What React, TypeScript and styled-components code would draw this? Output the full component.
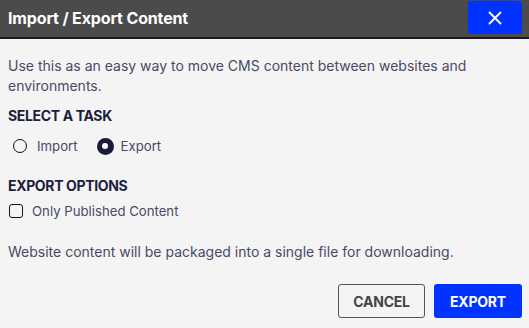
import React from "react";
import styled, { createGlobalStyle } from "styled-components";

const Global = createGlobalStyle`
  html, body { margin: 0; padding: 0; background: #f4f4f4; }
  body { font-family: Inter, "Noto Sans", sans-serif; -webkit-font-smoothing: antialiased; }
  * { box-sizing: border-box; }
`;

const Dialog = styled.div`
  width: 529px;
  height: 328px;
  background: #f4f4f4;
  display: flex;
  flex-direction: column;
`;

const Header = styled.div`
  height: 39px;
  background: #4b4b4b;
  border-bottom: 2px solid #1c1c1c;
  display: flex;
  align-items: center;
  justify-content: space-between;
  padding: 0 7px 2px 8px;
`;

const Title = styled.h1`
  margin: 0;
  font-size: 16px;
  font-weight: 700;
  color: #ffffff;
  letter-spacing: -0.15px;
`;

const CloseButton = styled.button`
  width: 54px;
  height: 33px;
  background: #0033ff;
  border: none;
  border-radius: 3px;
  display: flex;
  align-items: center;
  justify-content: center;
  padding: 0;
`;

const Body = styled.div`
  padding: 17px 7px 0 8px;
  display: flex;
  flex-direction: column;
`;

const Para = styled.p<{ $mt?: number }>`
  margin: ${(p) => p.$mt ?? 0}px 0 0;
  font-size: 14px;
  line-height: 20px;
  color: #4a4a66;
`;

const SectionHeading = styled.h2<{ $mt: number }>`
  margin: ${(p) => p.$mt}px 0 0;
  font-size: 14px;
  line-height: 18px;
  font-weight: 700;
  color: #1d1d3d;
  letter-spacing: -0.35px;
`;

const OptionRow = styled.div<{ $mt: number }>`
  margin-top: ${(p) => p.$mt}px;
  height: 20px;
  display: flex;
  align-items: center;
`;

const RadioLabel = styled.label<{ $checked?: boolean }>`
  display: flex;
  align-items: center;
  font-size: 13.2px;
  color: #4a4a66;
  margin-left: ${(p) => (p.$checked ? 0 : 5)}px;
  margin-right: ${(p) => (p.$checked ? 0 : 19)}px;
`;

const RadioCircle = styled.span<{ $checked?: boolean }>`
  width: ${(p) => (p.$checked ? 17 : 14)}px;
  height: ${(p) => (p.$checked ? 17 : 14)}px;
  border-radius: 50%;
  border: ${(p) => (p.$checked ? "none" : "1.5px solid #111")};
  background: ${(p) => (p.$checked ? "#1b1b3a" : "transparent")};
  display: flex;
  align-items: center;
  justify-content: center;
  margin-right: ${(p) => (p.$checked ? 7 : 10)}px;
  &::after {
    content: "";
    display: ${(p) => (p.$checked ? "block" : "none")};
    width: 6px;
    height: 6px;
    border-radius: 50%;
    background: #fff;
  }
`;

const CheckBox = styled.span`
  width: 14px;
  height: 14px;
  border: 1.5px solid #111;
  border-radius: 3px;
  margin: 0 9px 0 1px;
`;

const CheckLabel = styled.label`
  display: flex;
  align-items: center;
  font-size: 13.2px;
  color: #4a4a66;
`;

const Footer = styled.div`
  margin-top: 22px;
  display: flex;
  justify-content: flex-end;
  gap: 9px;
`;

const Button = styled.button<{ $primary?: boolean }>`
  height: 34px;
  width: ${(p) => (p.$primary ? 88 : 87)}px;
  border-radius: 3px;
  font-family: Inter, "Noto Sans", sans-serif;
  font-size: 14px;
  font-weight: 700;
  letter-spacing: -0.2px;
  color: ${(p) => (p.$primary ? "#ffffff" : "#444444")};
  background: ${(p) => (p.$primary ? "#0033ff" : "#f4f4f4")};
  border: ${(p) => (p.$primary ? "none" : "1px solid #555")};
  padding: 0;
`;

export default function App() {
  return (
    <>
      <Global />
      <Dialog>
        <Header>
          <Title>Import / Export Content</Title>
          <CloseButton aria-label="Close">
            <svg width="14" height="14" viewBox="0 0 14 14">
              <path d="M1.5 1.5 L12.5 12.5 M12.5 1.5 L1.5 12.5" stroke="#fff" strokeWidth="1.8" strokeLinecap="round" />
            </svg>
          </CloseButton>
        </Header>
        <Body>
          <Para>
            Use this as an easy way to move CMS content between websites and environments.
          </Para>
          <SectionHeading $mt={11}>SELECT A TASK</SectionHeading>
          <OptionRow $mt={11}>
            <RadioLabel>
              <RadioCircle />
              Import
            </RadioLabel>
            <RadioLabel $checked>
              <RadioCircle $checked />
              Export
            </RadioLabel>
          </OptionRow>
          <SectionHeading $mt={21}>EXPORT OPTIONS</SectionHeading>
          <OptionRow $mt={6}>
            <CheckLabel>
              <CheckBox />
              Only Published Content
            </CheckLabel>
          </OptionRow>
          <Para $mt={21}>Website content will be packaged into a single file for downloading.</Para>
          <Footer>
            <Button>CANCEL</Button>
            <Button $primary>EXPORT</Button>
          </Footer>
        </Body>
      </Dialog>
    </>
  );
}
